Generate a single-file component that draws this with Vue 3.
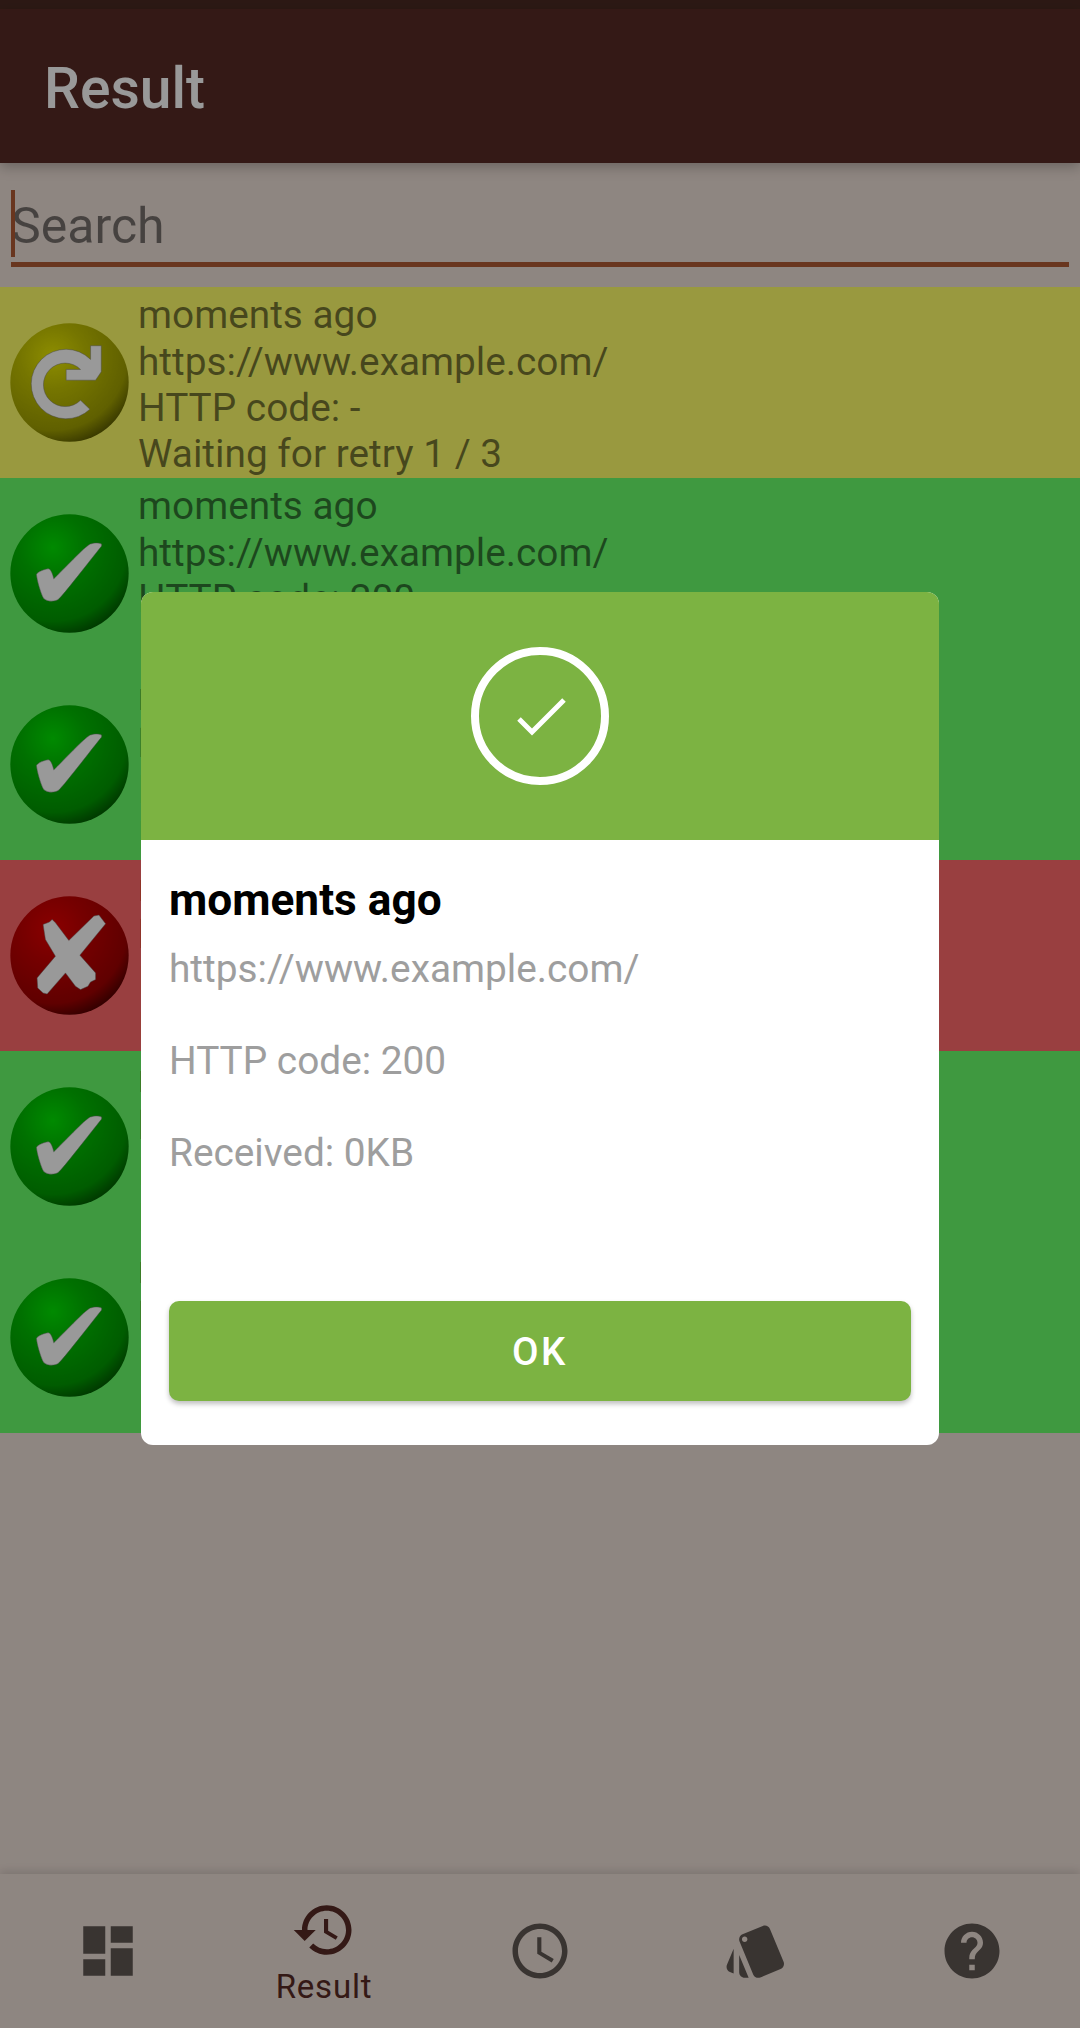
<script setup>
const okLines = ['moments ago', 'https://www.example.com/', 'HTTP code: 200', 'Received: 0KB']

// ball colours run from highlight to rim; the scrim darkens them further
const glyphs = {
  retry: {
    base: ['#ecec00', '#c4c400', '#a0a000', '#585800'],
    d: 'M63 -110 L95 -110 L95 -32 L78 -7 L-10 -7 L-10 -39 L33 -39 A65 65 0 1 0 33 53 L61 80 A104 104 0 1 1 63 -69 Z'
  },
  ok: {
    base: ['#00e600', '#00bc00', '#009a00', '#005800'],
    d: 'M96 -88 C88 -93 72 -92 62 -88 C45 -80 -20 -10 -47 16 C-50 4 -55 -12 -62 -14 C-72 -14 -95 -6 -99 3 C-97 22 -88 52 -80 70 C-74 84 -48 86 -34 78 C-22 70 60 -38 96 -82 Z'
  },
  fail: {
    base: ['#e60000', '#c40000', '#a00000', '#4c0000'],
    d: 'M-79 -93 L-60 -100 L-52 -108 L-42 -98 L-2 -45 L73 -118 L88 -121 L108 -95 L31 -1 L78 52 L78 72 L63 79 L55 92 L33 102 L18 92 L-12 52 L-67 115 L-79 112 L-95 97 L-97 67 L-42 2 L-72 -48 Z'
  }
}

const rows = [
  { id: 1, type: 'retry', bg: '#ffff69', lines: ['moments ago', 'https://www.example.com/', 'HTTP code: -', 'Waiting for retry 1 / 3'] },
  { id: 2, type: 'ok', bg: '#69ff6b', lines: okLines },
  { id: 3, type: 'ok', bg: '#69ff6b', lines: okLines },
  { id: 4, type: 'fail', bg: '#ff696b', lines: ['moments ago', 'https://www.example.com/', 'HTTP code: 500', 'Received: 0KB'] },
  { id: 5, type: 'ok', bg: '#69ff6b', lines: okLines },
  { id: 6, type: 'ok', bg: '#69ff6b', lines: okLines }
]

const tabs = [
  { id: 'dash', d: 'M3 13h8V3H3v10zm0 8h8v-6H3v6zm10 0h8V11h-8v10zm0-18v6h8V3h-8z' },
  { id: 'result', label: 'Result', d: 'M13 3c-4.97 0-9 4.03-9 9H1l3.89 3.89.07.14L9 12H6c0-3.87 3.13-7 7-7s7 3.13 7 7-3.13 7-7 7c-1.93 0-3.68-.79-4.94-2.06l-1.42 1.42C8.27 19.99 10.51 21 13 21c4.97 0 9-4.03 9-9s-4.03-9-9-9zm-1 5v5l4.28 2.54.72-1.21-3.5-2.08V8H12z' },
  { id: 'time', d: 'M11.99 2C6.47 2 2 6.48 2 12s4.47 10 9.99 10C17.52 22 22 17.52 22 12S17.52 2 11.99 2zM12 20c-4.42 0-8-3.58-8-8s3.58-8 8-8 8 3.58 8 8-3.58 8-8 8zm.5-13H11v6l5.25 3.15.75-1.23-4.5-2.67z' },
  { id: 'style', d: 'M2.53 19.65l1.34.56v-9.03l-2.43 5.86c-.41 1.02.08 2.19 1.09 2.61zm19.5-3.7L17.07 3.98c-.31-.75-1.04-1.21-1.81-1.23-.26 0-.53.04-.79.15L7.1 5.95c-.75.31-1.21 1.03-1.23 1.8-.01.27.04.54.15.8l4.96 11.97c.31.76 1.05 1.22 1.83 1.23.26 0 .52-.05.77-.15l7.36-3.05c1.02-.42 1.51-1.59 1.09-2.6zM7.88 8.75c-.55 0-1-.45-1-1s.45-1 1-1 1 .45 1 1-.45 1-1 1zm-2 11c0 1.1.9 2 2 2h1.45l-3.45-8.34v6.34z' },
  { id: 'help', d: 'M12 2C6.48 2 2 6.48 2 12s4.48 10 10 10 10-4.48 10-10S17.52 2 12 2zm1 17h-2v-2h2v2zm2.07-7.75l-.9.92C13.45 12.9 13 13.5 13 15h-2v-.5c0-1.1.45-2.1 1.17-2.83l1.24-1.26c.37-.36.59-.86.59-1.41 0-1.1-.9-2-2-2s-2 .9-2 2H8c0-2.21 1.79-4 4-4s4 1.79 4 4c0 .88-.36 1.68-.93 2.25z' }
]
</script>

<template>
  <div class="screen">
    <div class="status"></div>
    <header class="appbar">Result</header>

    <div class="search">
      <div class="search-field">
        <span class="caret"></span>
        <span class="placeholder">Search</span>
      </div>
    </div>

    <main class="list">
      <div v-for="row in rows" :key="row.id" class="row" :style="{ background: row.bg }">
        <svg class="status-icon" viewBox="-178 -178 356 356">
          <defs>
            <radialGradient :id="'ball' + row.id" cx="36%" cy="28%" r="78%">
              <stop offset="0" :stop-color="glyphs[row.type].base[0]" />
              <stop offset="0.35" :stop-color="glyphs[row.type].base[1]" />
              <stop offset="0.8" :stop-color="glyphs[row.type].base[2]" />
              <stop offset="1" :stop-color="glyphs[row.type].base[3]" />
            </radialGradient>
          </defs>
          <circle r="177" :fill="'url(#ball' + row.id + ')'" />
          <path :d="glyphs[row.type].d" fill="#fff" stroke="#777" stroke-opacity="0.7" stroke-width="2" />
        </svg>
        <div class="row-text">
          <div v-for="line in row.lines" :key="line">{{ line }}</div>
        </div>
      </div>
    </main>

    <nav class="tabs">
      <div v-for="tab in tabs" :key="tab.id" class="tab" :class="{ active: tab.label }">
        <svg viewBox="0 0 24 24" class="tab-icon"><path :d="tab.d" fill="currentColor" /></svg>
        <span v-if="tab.label" class="tab-label">{{ tab.label }}</span>
      </div>
    </nav>

    <div class="scrim">
      <div class="dialog">
        <div class="dialog-head">
          <svg class="dialog-icon" viewBox="0 0 138 138">
            <circle cx="69" cy="69" r="65" fill="none" stroke="#fff" stroke-width="8" />
            <path d="M48 72 L61 85 L93 53" fill="none" stroke="#fff" stroke-width="5" />
          </svg>
        </div>
        <div class="dialog-body">
          <div class="dialog-title">moments ago</div>
          <p>https://www.example.com/</p>
          <p>HTTP code: 200</p>
          <p>Received: 0KB</p>
          <button class="ok-btn">OK</button>
        </div>
      </div>
    </div>
  </div>
</template>

<style>
html,
body {
  margin: 0;
  padding: 0;
}
</style>

<style scoped>
.screen {
  position: relative;
  display: flex;
  flex-direction: column;
  width: 1080px;
  height: 2028px;
  overflow: hidden;
  background: #eddfd7;
  font-family: Roboto, "Liberation Sans", sans-serif;
}

.status {
  height: 9px;
  background: #4b2a23;
}

.appbar {
  position: relative;
  z-index: 1;
  display: flex;
  align-items: center;
  height: 154px;
  padding: 4px 0 0 44px;
  box-sizing: border-box;
  background: #572b25;
  color: #fff;
  font-size: 57px;
  font-weight: 500;
  box-shadow: 0 4px 12px rgba(0, 0, 0, 0.25);
}

.search {
  height: 124px;
  padding: 27px 11px 0;
  box-sizing: border-box;
}

.search-field {
  position: relative;
  display: flex;
  align-items: center;
  height: 72px;
  border-bottom: 5px solid #b05a35;
}

.caret {
  position: absolute;
  left: 0;
  top: 0;
  width: 4px;
  height: 67px;
  background: #b05a35;
}

.placeholder {
  font-size: 50px;
  color: rgba(0, 0, 0, 0.5);
}

.list {
  flex: 1;
}

.row {
  display: flex;
  align-items: center;
  height: 191px;
  padding-left: 10px;
  box-sizing: border-box;
}

.status-icon {
  flex: none;
  width: 119px;
  height: 119px;
}

.row-text {
  margin-left: 9px;
  padding-top: 5px;
  font-size: 38.8px;
  line-height: 46.3px;
  color: rgba(0, 0, 0, 0.54);
}

.tabs {
  display: flex;
  height: 154px;
  box-shadow: 0 -3px 8px rgba(0, 0, 0, 0.12);
}

.tab {
  flex: 1;
  display: flex;
  flex-direction: column;
  align-items: center;
  justify-content: center;
  color: #5f5753;
}

.tab.active {
  color: #572b25;
}

.tab-icon {
  width: 66px;
  height: 66px;
}

.tab-label {
  margin-top: 6px;
  font-size: 33px;
  letter-spacing: 0.8px;
  line-height: 36px;
}

.scrim {
  position: absolute;
  inset: 0;
  z-index: 2;
  display: flex;
  align-items: center;
  justify-content: center;
  padding-top: 9px;
  box-sizing: border-box;
  background: rgba(0, 0, 0, 0.4);
}

.dialog {
  width: 798px;
  height: 853px;
  border-radius: 12px;
  overflow: hidden;
  background: #fff;
  display: flex;
  flex-direction: column;
}

.dialog-head {
  flex: none;
  display: flex;
  align-items: center;
  justify-content: center;
  height: 248px;
  background: #7cb342;
}

.dialog-icon {
  width: 138px;
  height: 138px;
}

.dialog-body {
  flex: 1;
  display: flex;
  flex-direction: column;
  padding: 36px 28px 44px;
  box-sizing: border-box;
}

.dialog-title {
  font-size: 44.2px;
  font-weight: 700;
  line-height: 48px;
  color: #000;
}

.dialog-body p {
  margin: 0 0 50px 0;
  font-size: 38.8px;
  line-height: 42px;
  color: #9e9e9e;
}

.dialog-title + p {
  margin-top: 24px;
}

.ok-btn {
  margin-top: auto;
  height: 100px;
  border: 0;
  border-radius: 10px;
  background: #7cb342;
  color: #fff;
  font-family: inherit;
  font-size: 38.5px;
  font-weight: 500;
  letter-spacing: 2.5px;
  box-shadow: 0 3px 5px rgba(0, 0, 0, 0.25);
}
</style>
